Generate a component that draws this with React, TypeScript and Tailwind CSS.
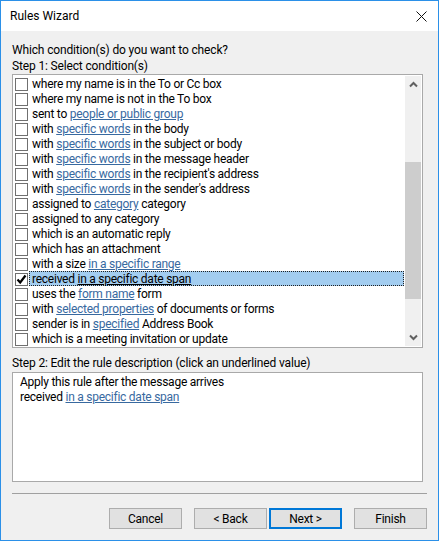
import React from "react";

type Part = string | { link: string };
const rows: { parts: Part[]; checked?: boolean; selected?: boolean }[] = [
  { parts: ["where my name is in the To or Cc box"] },
  { parts: ["where my name is not in the To box"] },
  { parts: ["sent to ", { link: "people or public group" }] },
  { parts: ["with ", { link: "specific words" }, " in the body"] },
  { parts: ["with ", { link: "specific words" }, " in the subject or body"] },
  { parts: ["with ", { link: "specific words" }, " in the message header"] },
  { parts: ["with ", { link: "specific words" }, " in the recipient's address"] },
  { parts: ["with ", { link: "specific words" }, " in the sender's address"] },
  { parts: ["assigned to ", { link: "category" }, " category"] },
  { parts: ["assigned to any category"] },
  { parts: ["which is an automatic reply"] },
  { parts: ["which has an attachment"] },
  { parts: ["with a size ", { link: "in a specific range" }] },
  { parts: ["received ", { link: "in a specific date span" }], checked: true, selected: true },
  { parts: ["uses the ", { link: "form name" }, " form"] },
  { parts: ["with ", { link: "selected properties" }, " of documents or forms"] },
  { parts: ["sender is in ", { link: "specified" }, " Address Book"] },
  { parts: ["which is a meeting invitation or update"] },
];

function Row({ parts, checked, selected }: { parts: Part[]; checked?: boolean; selected?: boolean }) {
  return (
    <div className="flex h-[15px] items-start pl-[1px]">
      <div className="mt-[2px] flex h-[13px] w-[13px] shrink-0 items-center justify-center border border-[#707070] bg-white">
        {checked && (
          <svg width="11" height="11" viewBox="0 0 11 11">
            <path d="M1.5 5.5 L4.2 8.5 L9.5 1.5" fill="none" stroke="#000" strokeWidth="2.2" />
          </svg>
        )}
      </div>
      <div
        className={
          "ml-[1px] flex h-[15px] flex-1 items-center whitespace-pre pl-[2px] pt-[2px] " +
          (selected ? "border border-dotted border-[#222222] bg-[#a3cdf0]" : "border border-transparent")
        }
      >
        {parts.map((p, i) =>
          typeof p === "string" ? (
            <span key={i}>{p}</span>
          ) : (
            <span key={i} className={selected ? "text-black underline" : "text-[#38699f] underline"}>
              {p.link}
            </span>
          )
        )}
      </div>
    </div>
  );
}

function Btn({ label, primary }: { label: string; primary?: boolean }) {
  return (
    <div
      className={
        "flex h-[21px] w-[73px] items-center justify-center bg-[#e1e1e1] pt-[1px] " +
        (primary ? "border-2 border-[#0078d7]" : "border border-[#adadad]")
      }
    >
      {label}
    </div>
  );
}

export default function App() {
  return (
    <div
      className="flex h-[541px] w-[439px] flex-col border border-[#2b90e8] bg-[#f0f0f0] text-[12px] leading-[15px] tracking-[-0.25px] text-black"
      style={{ fontFamily: 'Roboto, "Noto Sans", sans-serif' }}
    >
      <div className="flex h-[30px] items-center justify-between bg-white pl-[9px] pr-[11px]">
        <span className="tracking-[0px]">Rules Wizard</span>
        <svg width="11" height="11" viewBox="0 0 11 11">
          <path d="M0.5 0.5 L10.5 10.5 M10.5 0.5 L0.5 10.5" stroke="#111" strokeWidth="1" fill="none" />
        </svg>
      </div>

      <div className="flex flex-1 flex-col px-[11px]">
        <div className="mt-[12px] tracking-[-0.15px]">Which condition(s) do you want to check?</div>
        <div className="mt-[1px] tracking-[-0.15px]">Step 1: Select condition(s)</div>

        <div className="flex h-[274px] w-[411px] border border-[#a9a9a9] bg-white p-[1px]">
          <div className="flex-1 pr-[1px]">
            {rows.map((r, i) => (
              <Row key={i} {...r} />
            ))}
          </div>
          <div className="flex w-[16px] flex-col bg-[#f0f0f0]">
            <div className="flex h-[17px] items-center justify-center">
              <svg width="9" height="7" viewBox="0 0 9 7">
                <path d="M1 5.5 L4.5 2 L8 5.5" fill="none" stroke="#606060" strokeWidth="2" />
              </svg>
            </div>
            <div className="mt-[69px] h-[137px] bg-[#cdcdcd]" />
            <div className="flex-1" />
            <div className="flex h-[17px] items-center justify-center">
              <svg width="9" height="7" viewBox="0 0 9 7">
                <path d="M1 1.5 L4.5 5 L8 1.5" fill="none" stroke="#606060" strokeWidth="2" />
              </svg>
            </div>
          </div>
        </div>

        <div className="mt-[8px] tracking-[-0.15px]">Step 2: Edit the rule description (click an underlined value)</div>
        <div className="mt-[1px] h-[110px] w-[411px] border border-[#a9a9a9] bg-white pl-[7px] pt-[2px]">
          <div>Apply this rule after the message arrives</div>
          <div className="whitespace-pre">
            received <span className="text-[#38699f] underline">in a specific date span</span>
          </div>
        </div>

        <div className="mt-[11px] h-[2px] w-[415px] border-t border-[#a0a0a0] border-b-white" />

        <div className="mt-[13px] flex w-[415px] justify-end">
          <Btn label="Cancel" />
          <div className="w-[12px]" />
          <Btn label="< Back" />
          <div className="w-[2px]" />
          <Btn label="Next >" primary />
          <div className="w-[12px]" />
          <Btn label="Finish" />
        </div>
      </div>
    </div>
  );
}
